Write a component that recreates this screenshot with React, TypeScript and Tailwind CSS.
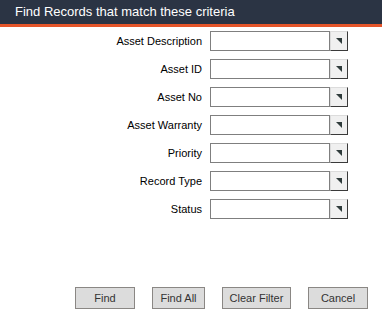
import React from 'react';

const fields = ['Asset Description', 'Asset ID', 'Asset No', 'Asset Warranty', 'Priority', 'Record Type', 'Status'];

const buttons = [
  { label: 'Find', w: 'w-[60px]' },
  { label: 'Find All', w: 'w-[53px]' },
  { label: 'Clear Filter', w: 'w-[69px]' },
  { label: 'Cancel', w: 'w-[60px]' },
];

const LookupField: React.FC<{ label: string }> = ({ label }) => (
  <div className="flex items-center h-[20px]">
    <label className="w-[202px] text-right text-[11px] text-black">{label}</label>
    <div className="ml-[8px] flex">
      <input
        type="text"
        className="w-[120px] h-[20px] border border-[#7f7f7f] bg-white px-1 text-[11px] outline-none"
      />
      <button
        type="button"
        className="w-[18px] h-[20px] flex items-center justify-center bg-[#f0f0f0] border border-t-[#dcdcdc] border-l-[#dcdcdc] border-r-[#3a3a3a] border-b-[#3a3a3a]"
      >
        <svg width="6" height="6" viewBox="0 0 6 6">
          <polygon points="0,0 6,0 6,6" fill="#2f3b3b" />
        </svg>
      </button>
    </div>
  </div>
);

export default function App() {
  return (
    <div className="w-[382px] h-[319px] bg-white flex flex-col font-['Liberation_Sans',Arial,sans-serif]">
      <div className="h-[24px] bg-[#2b3444] flex items-center pl-[15px] text-white text-[13px]">
        Find Records that match these criteria
      </div>
      <div className="h-[3px] bg-[#e5552a]" />
      <div className="flex flex-col gap-[8px] pt-[4px]">
        {fields.map(f => (
          <LookupField key={f} label={f} />
        ))}
      </div>
      <div className="flex gap-[17px] pl-[75px] mt-auto mb-[10px]">
        {buttons.map(b => (
          <button
            key={b.label}
            type="button"
            className={`${b.w} h-[22px] bg-[#dcdcdc] border border-[#8a8784] text-[11px] text-[#333]`}
          >
            {b.label}
          </button>
        ))}
      </div>
    </div>
  );
}
